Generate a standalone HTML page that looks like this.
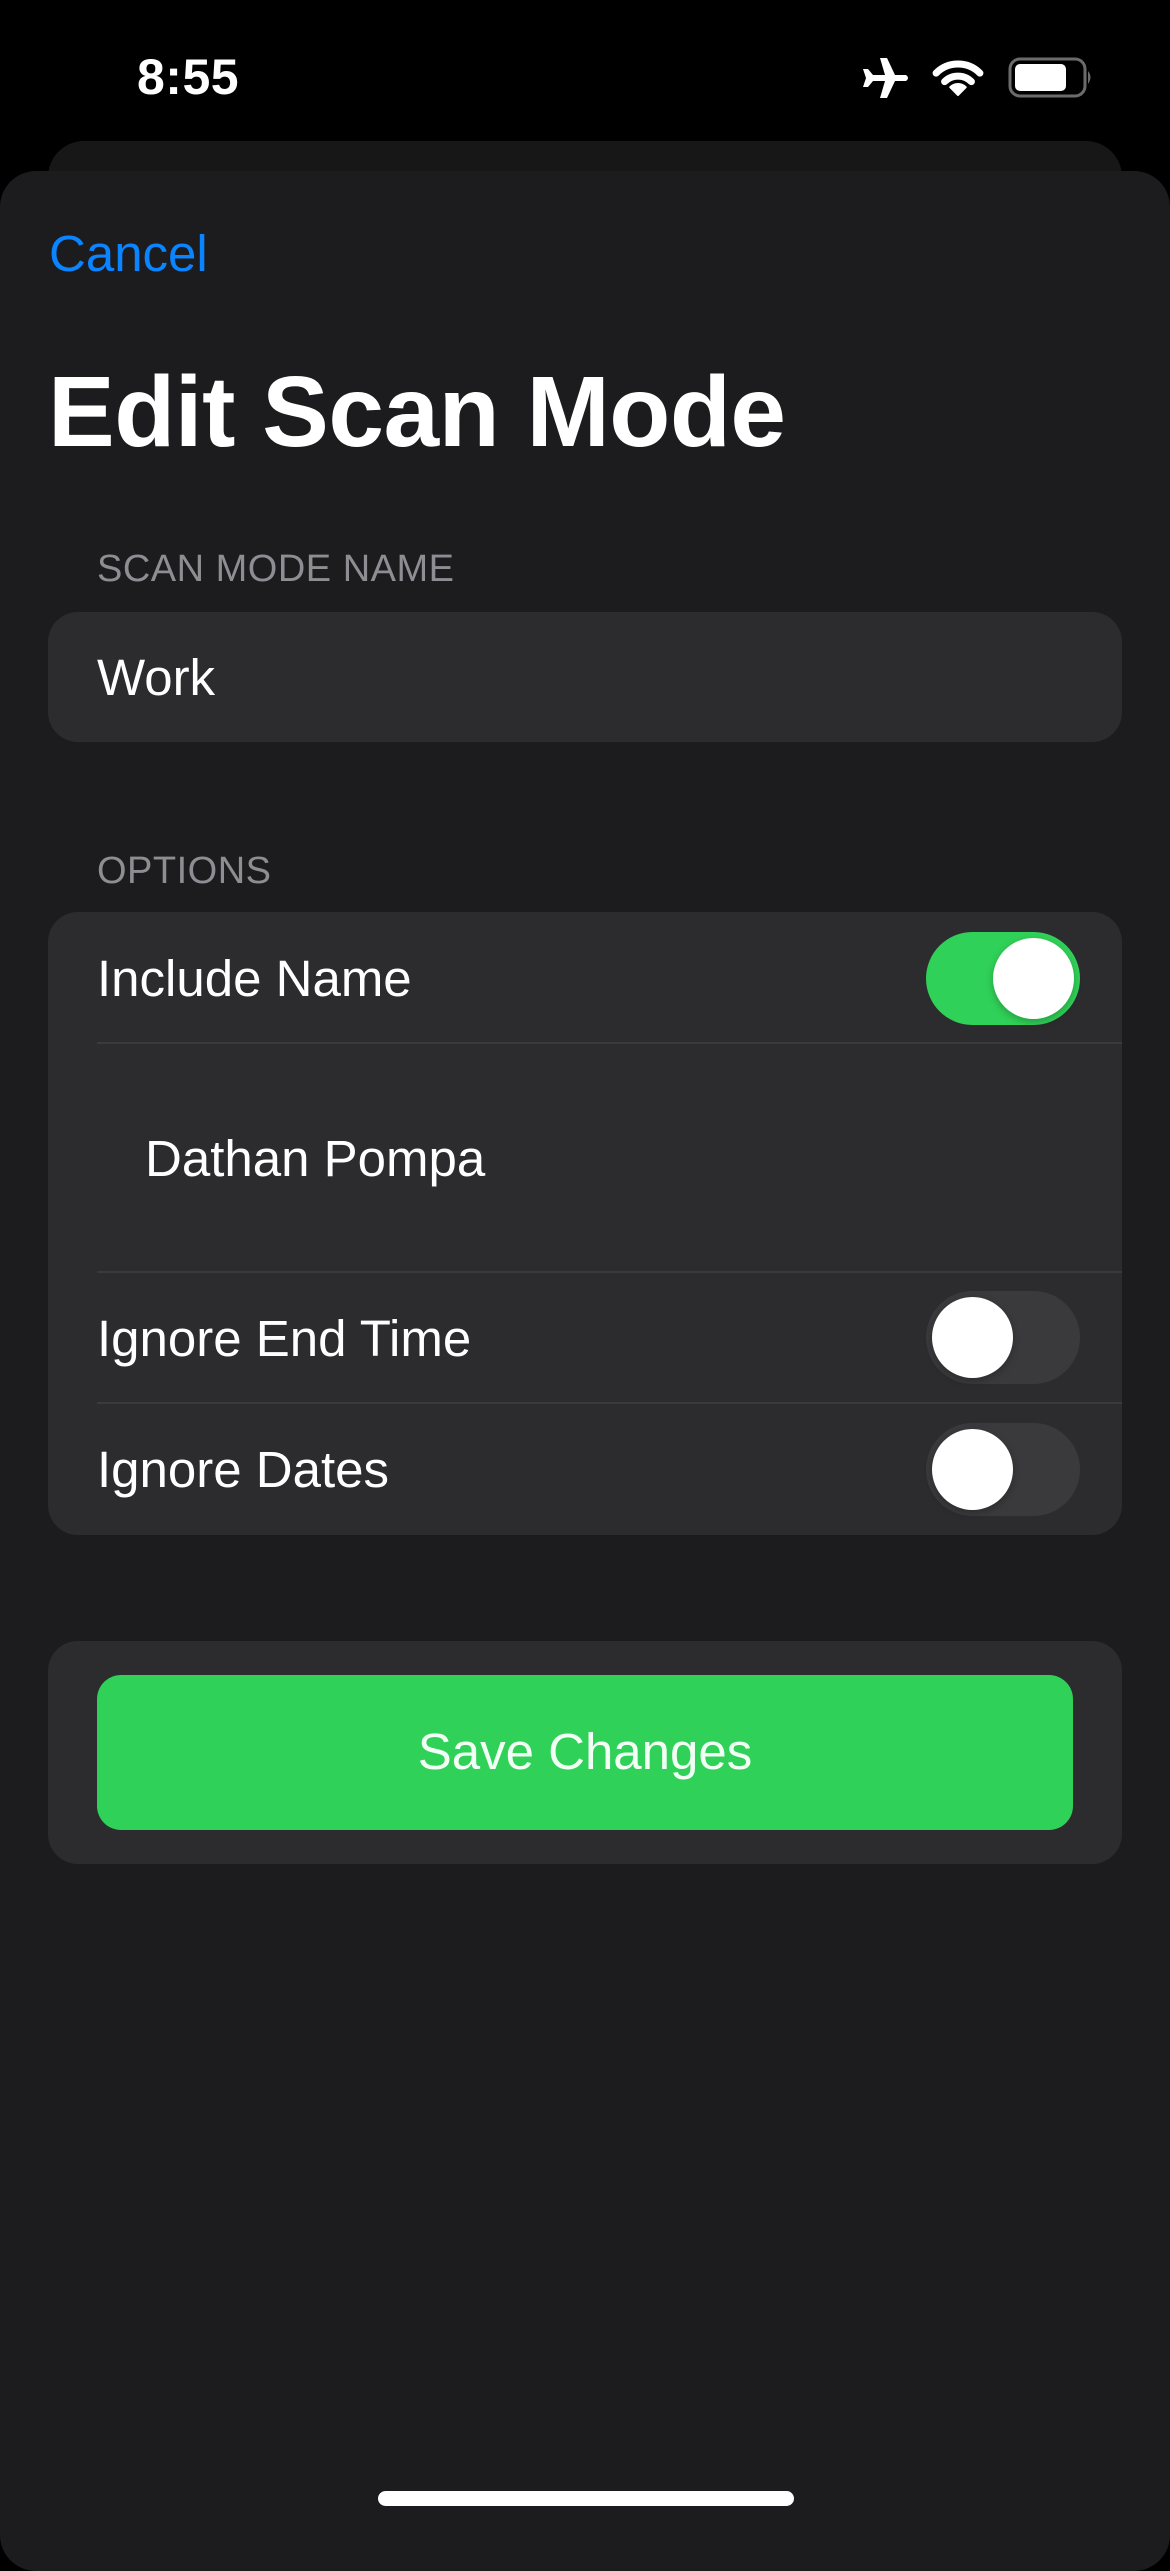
<!DOCTYPE html>
<html><head><meta charset="utf-8"><style>
*{margin:0;padding:0;box-sizing:border-box}
body{width:1170px;height:2532px;background:#000;position:relative;overflow:hidden;font-family:"Liberation Sans",sans-serif;color:#fff}
.abs{position:absolute}
.time{left:137px;top:48px;font-size:50px;font-weight:600;letter-spacing:0.5px}
.behind{left:48px;top:141px;width:1074px;height:100px;background:#171717;border-radius:36px}
.sheet{left:0;top:171px;width:1170px;height:2400px;background:#1c1c1e;border-radius:36px}
.cancel{left:49px;top:224px;font-size:51px;color:#0a84ff}
.title{left:48px;top:355px;font-size:100px;font-weight:700;letter-spacing:-0.5px}
.hdr{left:97px;font-size:38px;color:#8d8d93;letter-spacing:0.5px}
.box{left:48px;width:1074px;background:#2c2c2e;border-radius:30px}
.txt{font-size:51px}
.div{left:97px;width:1025px;height:2px;background:#3a3a3c}
.tog{width:154px;height:93px;border-radius:47px}
.knob{position:absolute;top:6px;width:81px;height:81px;border-radius:50%;background:#fff;box-shadow:0 3px 8px rgba(0,0,0,.25)}
</style></head><body>
<div class="abs time">8:55</div>
<svg class="abs" style="left:858px;top:56px" width="240" height="46" viewBox="0 0 240 46">
<path d="M22 2 L29 2 L37 19 L48 19 Q52 22 48 25 L37 25 L29 42 L22 42 L27 25 L15 25 L10 31 L5 31 L8 22 L5 13 L10 13 L15 19 L27 19 Z" fill="#fff"/>
<path d="M78.1 17.1 A31 31 0 0 1 121.9 17.1" stroke="#fff" stroke-width="7" fill="none" stroke-linecap="round"/>
<path d="M86.6 25.6 A19 19 0 0 1 113.4 25.6" stroke="#fff" stroke-width="7" fill="none" stroke-linecap="round"/>
<path d="M100 39 L92.2 31.2 A11 11 0 0 1 107.8 31.2 Z" fill="#fff" stroke="#fff" stroke-width="2" stroke-linejoin="round"/>
<rect x="152" y="3" width="75" height="37" rx="10" fill="none" stroke="#6b6b6b" stroke-width="3"/>
<rect x="157" y="8" width="51" height="27" rx="5" fill="#fff"/>
<path d="M230 15 Q235 21 230 28 Z" fill="#6b6b6b"/>
</svg>
<div class="abs behind"></div>
<div class="abs sheet"></div>
<div class="abs cancel">Cancel</div>
<div class="abs title">Edit Scan Mode</div>
<div class="abs hdr" style="top:548px">SCAN MODE NAME</div>
<div class="abs box" style="top:612px;height:130px"></div>
<div class="abs txt" style="left:97px;top:648px">Work</div>
<div class="abs hdr" style="top:850px">OPTIONS</div>
<div class="abs box" style="top:912px;height:623px"></div>
<div class="abs txt" style="left:97px;top:949px">Include Name</div>
<div class="abs tog" style="left:926px;top:932px;background:#30d158"><div class="knob" style="left:67px"></div></div>
<div class="abs div" style="top:1042px"></div>
<div class="abs txt" style="left:145px;top:1129px">Dathan Pompa</div>
<div class="abs div" style="top:1271px"></div>
<div class="abs txt" style="left:97px;top:1309px">Ignore End Time</div>
<div class="abs tog" style="left:926px;top:1291px;background:#3a3a3c"><div class="knob" style="left:6px"></div></div>
<div class="abs div" style="top:1402px"></div>
<div class="abs txt" style="left:97px;top:1440px">Ignore Dates</div>
<div class="abs tog" style="left:926px;top:1423px;background:#3a3a3c"><div class="knob" style="left:6px"></div></div>
<div class="abs box" style="top:1641px;height:223px"></div>
<div class="abs" style="left:97px;top:1675px;width:976px;height:155px;background:#30d158;border-radius:24px"></div>
<div class="abs txt" style="left:97px;top:1722px;width:976px;text-align:center;color:#f2fff5">Save Changes</div>
<div class="abs" style="left:378px;top:2491px;width:416px;height:15px;border-radius:8px;background:#fff"></div>
</body></html>
